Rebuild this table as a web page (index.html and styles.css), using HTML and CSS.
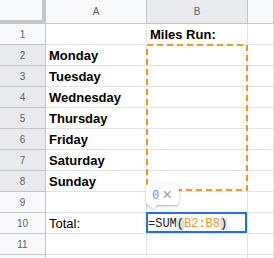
FILE: index.html
```html
<!DOCTYPE html>
<html lang="en">
<head>
    <meta charset="UTF-8">
    <meta name="viewport" content="width=device-width, initial-scale=1.0">
    <title>Miles Run</title>
    <link rel="stylesheet" href="styles.css">
</head>
<body>
    <div class="sheet">
        <div class="corner"></div>
        <div class="col-head">A</div>
        <div class="col-head sel">B</div>
        <div class="col-head"></div>

        <div class="row-head">1</div>
        <div class="cell"></div>
        <div class="cell bold">Miles Run:</div>
        <div class="cell"></div>

        <div class="row-head sel">2</div>
        <div class="cell bold">Monday</div>
        <div class="cell"></div>
        <div class="cell"></div>

        <div class="row-head sel">3</div>
        <div class="cell bold">Tuesday</div>
        <div class="cell"></div>
        <div class="cell"></div>

        <div class="row-head sel">4</div>
        <div class="cell bold">Wednesday</div>
        <div class="cell"></div>
        <div class="cell"></div>

        <div class="row-head sel">5</div>
        <div class="cell bold">Thursday</div>
        <div class="cell"></div>
        <div class="cell"></div>

        <div class="row-head sel">6</div>
        <div class="cell bold">Friday</div>
        <div class="cell"></div>
        <div class="cell"></div>

        <div class="row-head sel">7</div>
        <div class="cell bold">Saturday</div>
        <div class="cell"></div>
        <div class="cell"></div>

        <div class="row-head sel">8</div>
        <div class="cell bold">Sunday</div>
        <div class="cell"></div>
        <div class="cell"></div>

        <div class="row-head">9</div>
        <div class="cell"></div>
        <div class="cell"></div>
        <div class="cell"></div>

        <div class="row-head">10</div>
        <div class="cell">Total:</div>
        <div class="cell editing"><span>=SUM</span><span class="paren">(</span><span class="ref">B2:B8</span><span class="paren">)</span></div>
        <div class="cell"></div>

        <div class="row-head">11</div>
        <div class="cell"></div>
        <div class="cell"></div>
        <div class="cell"></div>

        <!-- next row only peeks in at the bottom edge -->
        <div class="row-head"></div>
        <div class="cell"></div>
        <div class="cell"></div>
        <div class="cell"></div>

        <!-- range referenced by the formula -->
        <svg class="ref-range" width="102" height="147" viewBox="0 0 102 147">
            <rect x="1" y="1" width="100" height="145" fill="none" stroke="#f6961e" stroke-width="2" stroke-dasharray="6 4"/>
        </svg>

        <!-- live result hint -->
        <div class="hint">
            <span class="hint-value">0</span>
            <span class="hint-close">×</span>
        </div>
    </div>
</body>
</html>
```

FILE: styles.css
```css
body {
    margin: 0;
    padding: 0;
    background-color: #fff;
    font-family: "Liberation Sans", Arial, sans-serif;
}

.sheet {
    position: relative;
    display: grid;
    grid-template-columns: 46px 101px 101px 1fr;
    grid-template-rows: 24px repeat(12, 21px);
    width: 274px;
    height: 258px;
    overflow: hidden;
}

.sheet > div {
    box-sizing: border-box;
}

.corner {
    background-color: #f8f9fa;
    border-right: 4px solid #c4c7c5;
    border-bottom: 4px solid #c4c7c5;
}

.col-head,
.row-head {
    display: flex;
    align-items: center;
    justify-content: center;
    background-color: #f8f9fa;
    color: #5f6368;
    font-size: 10px;
    border-right: 1px solid #c4c7c5;
    border-bottom: 1px solid #c4c7c5;
}

.col-head.sel,
.row-head.sel {
    background-color: #e8eaed;
}

.cell {
    display: flex;
    align-items: flex-end;
    padding: 0 3px 2px;
    font-size: 13px;
    line-height: 15px;
    color: #000;
    white-space: nowrap;
    border-right: 1px solid #e2e3e3;
    border-bottom: 1px solid #e2e3e3;
}

.bold {
    font-weight: bold;
}

.editing {
    position: relative;
    padding: 0 0 3px 1px;
    font-family: "Liberation Mono", "Courier New", monospace;
    font-size: 12px;
    line-height: 12px;
    color: #202124;
}

.editing::after {
    content: "";
    position: absolute;
    top: -1px;
    left: -1px;
    right: 0;
    bottom: 0;
    border: 2px solid #1a73e8;
}

.paren {
    background-color: #e0e0e0;
}

.ref {
    color: #f6961e;
}

.ref-range {
    position: absolute;
    left: 146px;
    top: 44px;
}

.hint {
    position: absolute;
    left: 146px;
    top: 184px;
    width: 33px;
    height: 21px;
    box-sizing: border-box;
    display: flex;
    align-items: center;
    gap: 3px;
    padding-left: 6px;
    background-color: #fff;
    border-radius: 3px;
    box-shadow: 0 1px 3px rgba(60, 64, 67, 0.3), 0 1px 1px rgba(60, 64, 67, 0.15);
}

.hint::after {
    content: "";
    position: absolute;
    left: 4px;
    bottom: -3px;
    width: 6px;
    height: 6px;
    background-color: #fff;
    transform: rotate(45deg);
    box-shadow: 1px 1px 1px rgba(60, 64, 67, 0.2);
}

.hint-value {
    font-family: "DejaVu Sans Mono", monospace;
    font-size: 12px;
    color: #6d9eeb;
}

.hint-close {
    font-size: 17px;
    line-height: 17px;
    color: #9aa0a6;
}
```
